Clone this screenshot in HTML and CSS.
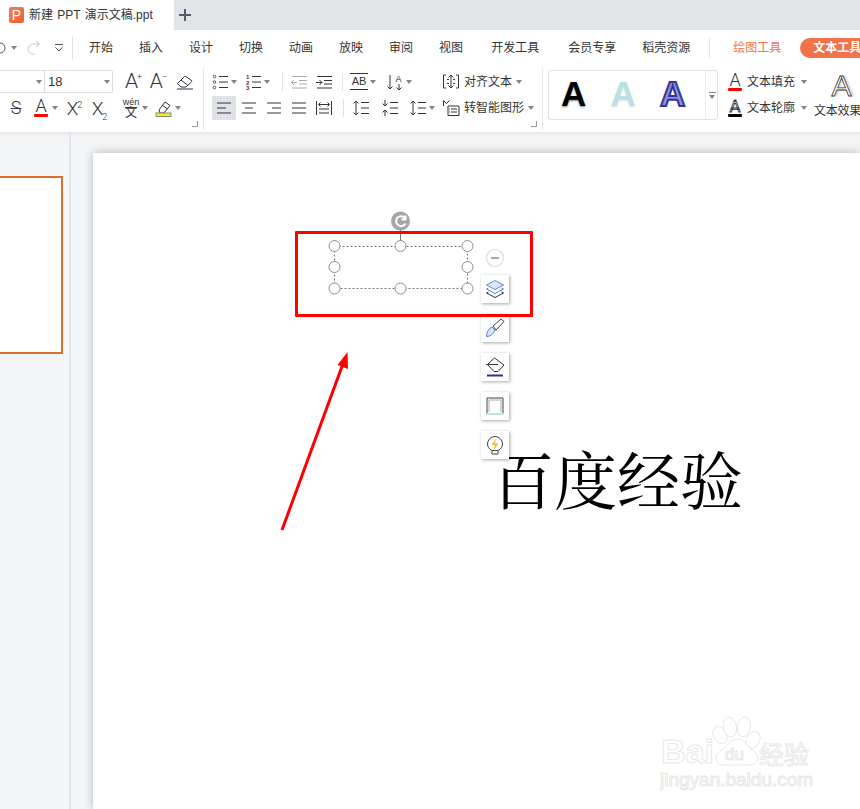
FILE: index.html
```html
<!DOCTYPE html>
<html lang="zh-CN">
<head>
    <meta charset="UTF-8">
    <meta name="viewport" content="width=device-width, initial-scale=1.0">
    <title>新建 PPT 演示文稿.ppt</title>
    <link rel="stylesheet" href="styles.css">
</head>
<body>
    <!-- 标签栏 -->
    <div class="tabbar">
        <div class="tab">
            <span class="logo">P</span>
            <span class="tab-title">新建 PPT 演示文稿.ppt</span>
        </div>
        <svg class="tab-add" width="14" height="14" viewBox="0 0 14 14"><path d="M7 1v12M1 7h12"/></svg>
    </div>

    <!-- 菜单栏 -->
    <div class="menubar">
        <svg class="quick" width="6" height="14" viewBox="0 0 6 14"><path d="M0 2a5 5 0 0 1 0 10"/></svg>
        <span class="caret caret-undo"></span>
        <svg class="quick-redo" width="14" height="16" viewBox="0 0 14 16"><path d="M12 4H6a5 5 0 0 0 0 10h2M9 1l3.500 3L9 7"/></svg>
        <svg class="quick-more" width="10" height="10" viewBox="0 0 10 10"><path d="M1 1.500h8M1.500 4.500L5 8l3.500-3.500"/></svg>
        <span class="sep sep-menu"></span>
        <nav class="menu">
            <a>开始</a><a>插入</a><a>设计</a><a>切换</a><a>动画</a><a>放映</a><a>审阅</a><a>视图</a>
            <a class="wide">开发工具</a><a class="wider">会员专享</a><a>稻壳资源</a>
        </nav>
        <span class="sep sep-tools"></span>
        <a class="tool-tab">绘图工具</a>
        <a class="tool-pill">文本工具</a>
    </div>

    <!-- 功能区 -->
    <div class="ribbon">
        <div class="group group-font">
            <div class="row">
                <div class="fontbox">
                    <div class="font-name"><span class="caret"></span></div>
                    <div class="font-size">18<span class="caret"></span></div>
                </div>
                <span class="glyph big ml-4">A<sup>+</sup></span>
                <span class="glyph big">A<sup>−</sup></span>
                <svg class="ic ml-2" viewBox="0 0 18 18"><path d="M1.500 10.500l7-7a1 1 0 0 1 1.400 0l5.600 4a1 1 0 0 1 0 1.400L10 14H5z"/><path d="M5 7l6.500 5M1 16h16"/></svg>
            </div>
            <div class="row">
                <span class="glyph strike ml-first">S</span>
                <div class="tool">
                    <span class="swatch"><span class="swatch-a">A</span><span class="bar bar-red"></span></span>
                    <span class="caret"></span>
                </div>
                <span class="glyph sub">X<sup>2</sup></span>
                <span class="glyph sub">X<sub>2</sub></span>
                <div class="tool ml-7">
                    <span class="pinyin"><span>wén</span><span>文</span></span>
                    <span class="caret"></span>
                </div>
                <div class="tool">
                    <svg class="ic" viewBox="0 0 18 18"><path d="M4 11l6-8 5 3.500-6 7.500H5z"/><path d="M7.500 6.500l5 3.500"/><rect class="hl" x="1" y="14" width="15" height="3.500"/></svg>
                    <span class="caret"></span>
                </div>
            </div>
            <svg class="corner" width="6" height="6" viewBox="0 0 6 6"><path d="M5.500 0v5.500H0"/></svg>
        </div>

        <div class="group group-para">
            <div class="row">
                <div class="tool">
                    <svg class="ic" viewBox="0 0 18 18"><circle cx="3.500" cy="3.500" r="1.300"/><circle cx="3.500" cy="9" r="1.300"/><circle cx="3.500" cy="14.500" r="1.300"/><path d="M8 3.500h9M8 9h9M8 14.500h9"/></svg>
                    <span class="caret"></span>
                </div>
                <div class="tool">
                    <svg class="ic" viewBox="0 0 18 18"><text class="num" x="2" y="6">1</text><text class="num" x="2" y="11.500">2</text><text class="num" x="2" y="17">3</text><path d="M8 3.500h9M8 9h9M8 14.500h9"/></svg>
                    <span class="caret"></span>
                </div>
                <span class="sep ml-5"></span>
                <svg class="ic off" viewBox="0 0 18 18"><path d="M2 3.500h15M9 7.500h8M9 11h8M2 15h15M7 9.500H1M4 7L1.500 9.500 4 12"/></svg>
                <svg class="ic" viewBox="0 0 18 18"><path d="M2 3.500h15M9 7.500h8M9 11h8M2 15h15M1 9.500h6M4.500 7L7 9.500 4.500 12"/></svg>
                <span class="sep ml-2"></span>
                <div class="tool">
                    <span class="ab">AB</span>
                    <span class="caret"></span>
                </div>
                <div class="tool ml-3">
                    <svg class="ic" viewBox="0 0 18 18"><path d="M4 2v14M1.500 13.500L4 16l2.500-2.500M13 11v6M10.500 14.500L13 17l2.500-2.500"/><text class="num-a" x="9.500" y="8.500">A</text></svg>
                    <span class="caret"></span>
                </div>
                <div class="tool tool-text ml-23">
                    <svg class="ic" viewBox="0 0 18 18"><path d="M4 2H1.500v13H4M14 2h2.500v13H14M9 2v13M6.500 4.500L9 2l2.500 2.500M6.500 12.500L9 15l2.500-2.500M5 6.500h2M11 6.500h2M5 10.500h2M11 10.500h2"/></svg>
                    <span class="label">对齐文本</span>
                    <span class="caret"></span>
                </div>
            </div>
            <div class="row">
                <div class="aligns">
                    <span class="cell active"><svg class="ic" viewBox="0 0 18 18"><path d="M2 4h14M2 9h9M2 14h14"/></svg></span>
                    <span class="cell"><svg class="ic" viewBox="0 0 18 18"><path d="M2 4h14M5 9h8M2 14h14"/></svg></span>
                    <span class="cell"><svg class="ic" viewBox="0 0 18 18"><path d="M2 4h14M7 9h9M2 14h14"/></svg></span>
                    <span class="cell"><svg class="ic" viewBox="0 0 18 18"><path d="M2 4h14M2 9h14M2 14h14"/></svg></span>
                    <span class="cell"><svg class="ic" viewBox="0 0 18 18"><path d="M1.500 2v14M16.500 2v14M4 10h10M4 14h10M3.500 5.500h11M5.500 3.500l-2 2 2 2M12.500 3.500l2 2-2 2"/></svg></span>
                </div>
                <span class="sep"></span>
                <svg class="ic ml-1" viewBox="0 0 18 18"><path d="M4 2v14M1.500 4.500L4 2l2.500 2.500M1.500 13.500L4 16l2.500-2.500M9 3.500h8M9 9h8M9 14.500h8"/></svg>
                <svg class="ic ml-4" viewBox="0 0 18 18"><path d="M4 1v6M1.500 4.500L4 7l2.500-2.500M4 11v6M1.500 13.500L4 11l2.500 2.500M9 3.500h8M9 9h8M9 14.500h8"/></svg>
                <div class="tool ml-3">
                    <svg class="ic" viewBox="0 0 18 18"><path d="M4 2v14M1.500 4.500L4 2l2.500 2.500M1.500 13.500L4 16l2.500-2.500M9 3.500h8M9 9h8M9 14.500h8"/></svg>
                    <span class="caret"></span>
                </div>
                <div class="tool tool-text">
                    <svg class="ic" viewBox="0 0 18 18"><path d="M1.500 7V1.500l3 3 3-3M6 7h11v9.500H6zM9 10h6M9 13h6M7 10h.8M7 13h.8"/></svg>
                    <span class="label">转智能图形</span>
                    <span class="caret"></span>
                </div>
            </div>
            <svg class="corner" width="6" height="6" viewBox="0 0 6 6"><path d="M5.500 0v5.500H0"/></svg>
        </div>

        <div class="gallery">
            <span class="style-a a-black">A</span>
            <span class="style-a a-teal">A</span>
            <span class="style-a a-blue">A</span>
            <div class="gallery-more"><span class="more-bar"></span><span class="caret"></span></div>
        </div>

        <div class="text-tools">
            <div class="tool tool-fill">
                <span class="swatch"><span class="swatch-a">A</span><span class="bar bar-red"></span></span>
                <span class="label">文本填充</span>
                <span class="caret"></span>
            </div>
            <div class="tool tool-fill">
                <span class="swatch"><span class="swatch-a swatch-outline">A</span><span class="bar bar-black"></span></span>
                <span class="label">文本轮廓</span>
                <span class="caret"></span>
            </div>
        </div>
        <div class="text-effect">
            <span class="effect-a">A</span>
            <span class="label">文本效果</span>
        </div>
    </div>

    <!-- 工作区 -->
    <div class="workspace">
        <aside class="sidebar">
            <div class="thumb"></div>
        </aside>
        <main class="editor">
            <div class="slide">
                <div class="red-box"></div>

                <svg class="canvas" width="767" height="656" viewBox="93 153 767 656">
                    <path class="arrow-line" d="M282 530L344 361"/>
                    <path class="arrow-head" d="M347.500 352L348 369 337.500 365z"/>
                    <path class="knob-line" d="M400.500 228v18"/>
                    <circle class="knob" cx="400.500" cy="221" r="9.500"/>
                    <path class="knob-mark" d="M405.500 223.500a5 5 0 1 1 -.5 -5.500M405.500 215.500v4h-4"/>
                    <rect class="dash" x="334.500" y="246.500" width="133" height="42"/>
                    <circle class="handle" cx="334.500" cy="246" r="5.500"/>
                    <circle class="handle" cx="400.500" cy="246" r="5.500"/>
                    <circle class="handle" cx="467.500" cy="246" r="5.500"/>
                    <circle class="handle" cx="334.500" cy="267" r="5.500"/>
                    <circle class="handle" cx="467.500" cy="267" r="5.500"/>
                    <circle class="handle" cx="334.500" cy="288.500" r="5.500"/>
                    <circle class="handle" cx="400.500" cy="288.500" r="5.500"/>
                    <circle class="handle" cx="467.500" cy="288.500" r="5.500"/>
                    <circle class="minus-ring" cx="495" cy="258" r="8.500"/>
                    <path class="minus-mark" d="M491 258h8"/>
                </svg>

                <div class="float-bar">
                    <div class="float-btn">
                        <svg width="20" height="20" viewBox="0 0 20 20"><path class="layer-top" d="M10 1.500l8.500 4.500-8.500 4.500L1.500 6z"/><path class="layer-mid" d="M3.500 9L1.500 10l8.500 4.500 8.500-4.500-2-1"/><path class="layer-low" d="M3.500 13l-2 1 8.500 4.500 8.500-4.500-2-1"/></svg>
                    </div>
                    <div class="float-btn">
                        <svg width="20" height="20" viewBox="0 0 20 20"><path class="brush-tip" d="M1.500 18.500c0-4 2-8 5.500-9.500l3 3c-1 3-4 6.500-8.500 6.500z"/><path class="brush-shaft" d="M8 8l8-7 3 2.500-8 8.500z"/></svg>
                    </div>
                    <div class="float-btn">
                        <svg width="20" height="20" viewBox="0 0 20 20"><path class="bucket" d="M1 7.500h12M9.500 1L2.500 7.500l6.500 7h4l6-6.500z"/><path class="bucket-bar" d="M2 18.500h16"/></svg>
                    </div>
                    <div class="float-btn">
                        <svg width="20" height="20" viewBox="0 0 20 20"><path class="frame" d="M2 17V2h16v15"/><path class="frame-in" d="M4 16V4h12v12"/><path class="frame-bar" d="M1 18h18"/></svg>
                    </div>
                    <div class="float-btn">
                        <svg width="20" height="20" viewBox="0 0 20 20"><path class="bulb" d="M7 15.500C4 14 2.500 11.800 2.500 9a7.500 7.500 0 0 1 15 0c0 2.800-1.500 5-4.500 6.500zM7 15.500v3.500h6v-3.500"/><path class="bolt" d="M11 3.500L6.500 10H10l-1 5 4.500-6.500H10z"/></svg>
                    </div>
                </div>

                <div class="slide-text">百度经验</div>

                <svg class="watermark" width="160" height="80" viewBox="0 0 160 80">
                    <ellipse cx="60" cy="21" rx="6.500" ry="9" transform="rotate(-30 60 21)"/>
                    <ellipse cx="70" cy="13" rx="6.500" ry="10" transform="rotate(-10 70 13)"/>
                    <ellipse cx="84" cy="13" rx="6.500" ry="10" transform="rotate(10 84 13)"/>
                    <ellipse cx="93" cy="26" rx="6.500" ry="9" transform="rotate(30 93 26)"/>
                    <path d="M78 25c-7 0-10 6-15 10-5 3-7 6-7 9 0 5 4 7 9 7h24c5 0 9-3 9-7 0-4-3-6-7-9-5-4-7-10-13-10z"/>
                    <text class="wm-bai" x="1" y="49">Bai</text>
                    <text class="wm-du" x="65" y="46">du</text>
                    <text class="wm-cn" x="99" y="50">经验</text>
                    <text class="wm-url" x="0" y="72">jingyan.baidu.com</text>
                </svg>
            </div>
        </main>
    </div>
</body>
</html>
```

FILE: styles.css
```css
* {
    box-sizing: border-box;
    margin: 0;
    padding: 0;
}
html, body {
    width: 860px;
    height: 809px;
    overflow: hidden;
}
body {
    display: flex;
    flex-direction: column;
    background-color: #fff;
    color: #333;
    font: 12px/1 "Liberation Sans", "Noto Sans CJK SC", sans-serif;
}
svg {
    display: block;
    flex: none;
}

/* 标签栏 */
.tabbar {
    display: flex;
    align-items: center;
    flex: none;
    height: 30px;
    background-color: #e3e4e8;
}
.tab {
    display: flex;
    align-items: center;
    gap: 5px;
    width: 174px;
    height: 30px;
    padding-left: 9px;
    background-color: #fff;
}
.logo {
    display: flex;
    align-items: center;
    justify-content: center;
    width: 15px;
    height: 16px;
    border-radius: 2px;
    background: linear-gradient(135deg, #f37f50, #ea6133);
    color: #fff;
    font-size: 14px;
}
.tab-title {
    font-size: 12px;
    word-spacing: 1px;
    white-space: nowrap;
}
.tab-add {
    margin-left: 4px;
    fill: none;
    stroke: #555c6b;
    stroke-width: 2;
}

/* 菜单栏 */
.menubar {
    display: flex;
    align-items: center;
    flex: none;
    height: 36px;
    white-space: nowrap;
}
.quick {
    fill: none;
    stroke: #555;
}
.caret {
    flex: none;
    width: 0;
    height: 0;
    border-style: solid;
    border-width: 4px 3.500px 0;
    border-color: #80848c transparent transparent;
}
.caret-undo {
    margin-left: 5px;
}
.quick-redo {
    margin-left: 10px;
    fill: none;
    stroke: #c8c8c8;
}
.quick-more {
    margin-left: 13px;
    fill: none;
    stroke: #555;
}
.sep {
    flex: none;
    width: 1px;
    height: 18px;
    background-color: #e2e3e6;
}
.sep-menu {
    height: 24px;
    margin-left: 8px;
}
.menu {
    display: flex;
    flex: none;
    gap: 26px;
    margin-left: 16px;
    a {
        display: block;
    }
    .wide {
        margin-left: 2px;
    }
    .wider {
        margin-left: 3px;
    }
}
.sep-tools {
    height: 20px;
    margin-left: 19px;
}
.tool-tab {
    flex: none;
    margin-left: 23px;
    color: #f2764a;
}
.tool-pill {
    flex: none;
    width: 70px;
    height: 20px;
    margin-left: 19px;
    padding: 4px 0 0 13px;
    border-radius: 10px;
    background-color: #f4714a;
    color: #fff;
    font-weight: bold;
}

/* 功能区 */
.ribbon {
    display: flex;
    flex: none;
    height: 66px;
    white-space: nowrap;
}
.group {
    position: relative;
    display: flex;
    flex: none;
    flex-direction: column;
    gap: 3px;
    height: 62px;
    margin-top: 2px;
    padding-top: 2px;
    border-right: 1px solid #e8e8e8;
}
.group-font {
    width: 204px;
}
.group-para {
    width: 339px;
    padding-left: 7px;
}
.row {
    display: flex;
    align-items: center;
    gap: 7px;
    height: 23px;
}
.row + .row {
    height: 24px;
}
.tool {
    display: flex;
    align-items: center;
    flex: none;
    gap: 2px;
}
.ic {
    width: 18px;
    height: 18px;
    fill: none;
    stroke: #30343c;
    stroke-width: 1;
}
.ic circle {
    stroke-width: 0.800;
}
.ic.off {
    stroke: #a9abaf;
}
.ic .num {
    fill: #30343c;
    stroke: none;
    font: bold 6px "Liberation Sans", sans-serif;
}
.ic .num-a {
    fill: #30343c;
    stroke: none;
    font: 9px "Liberation Sans", sans-serif;
}
.ic .hl {
    fill: #ffee00;
    stroke: #888;
}
.ml-first { margin-left: 7px; }
.ml-1 { margin-left: 1px; }
.ml-2 { margin-left: 2px; }
.ml-3 { margin-left: 3px; }
.ml-4 { margin-left: 4px; }
.ml-5 { margin-left: 5px; }
.ml-7 { margin-left: 7px; }
.ml-23 { margin-left: 23px; }
.corner {
    position: absolute;
    right: 5px;
    bottom: 3px;
    fill: none;
    stroke: #999;
}

/* 字体框 */
.fontbox {
    display: flex;
    flex: none;
    width: 113px;
    height: 23px;
    border: 1px solid #dedede;
    border-left: 0;
    border-radius: 0 2px 2px 0;
}
.font-name, .font-size {
    display: flex;
    align-items: center;
    justify-content: flex-end;
    padding-right: 1px;
}
.font-name {
    width: 45px;
    padding-right: 2px;
    border-right: 1px solid #dedede;
}
.font-size {
    flex: 1;
    justify-content: space-between;
    padding: 0 2px 0 3px;
    font-size: 13px;
}

/* 字母图标 */
.glyph {
    display: block;
    flex: none;
    width: 18px;
    color: #30343c;
    font-family: Roboto, "Liberation Sans", sans-serif;
    font-weight: 300;
    text-align: center;
    sup, sub {
        font-size: 9px;
        line-height: 0;
    }
}
.glyph.big {
    font-size: 21px;
    letter-spacing: -1px;
}
.glyph.sub {
    font-size: 19px;
    letter-spacing: -1px;
}
.glyph.strike {
    font-size: 18px;
    text-decoration: line-through;
    text-decoration-thickness: 1px;
}
.swatch {
    display: flex;
    flex: none;
    flex-direction: column;
    align-items: center;
    gap: 0;
    width: 18px;
}
.swatch-a {
    font-family: Roboto, "Liberation Sans", sans-serif;
    font-size: 18px;
    font-weight: 300;
    line-height: 14px;
}
.swatch-outline {
    color: #fff;
    font-size: 17px;
    font-weight: 400;
    -webkit-text-stroke: 0.800px #333;
}
.bar {
    display: block;
    width: 14px;
    height: 3px;
    margin-top: 1px;
    border-radius: 1px;
}
.bar-red {
    background-color: #f00;
}
.bar-black {
    background-color: #000;
}
.pinyin {
    display: flex;
    flex: none;
    flex-direction: column;
    align-items: center;
    width: 18px;
    font-size: 9px;
    span + span {
        font-size: 12px;
        line-height: 11px;
        border-top: 1px solid #333;
    }
}
.ab {
    flex: none;
    width: 18px;
    padding: 2px 0;
    border-top: 1px solid #333;
    border-bottom: 1px solid #333;
    font-size: 11px;
    text-align: center;
}
.aligns {
    display: flex;
    gap: 1px;
    margin-left: 1px;
}
.cell {
    display: flex;
    align-items: center;
    justify-content: center;
    width: 24px;
    height: 24px;
    border-radius: 2px;
    &.active {
        background-color: #dfe2e6;
    }
}
.tool-text {
    gap: 4px;
}

/* 样式库 */
.gallery {
    display: flex;
    flex: none;
    align-items: center;
    width: 170px;
    height: 50px;
    margin: 4px 0 0 5px;
    border: 1px solid #e2e2e2;
    border-radius: 3px;
}
.style-a {
    flex: none;
    width: 49.500px;
    margin-top: -4px;
    font-size: 35px;
    font-weight: bold;
    text-align: center;
}
.a-black {
    color: #000;
    text-shadow: 0 1px 2px rgba(0, 0, 0, 0.5);
}
.a-teal {
    color: #bcdfe4;
    text-shadow: 0 1px 2px rgba(150, 190, 200, 0.4);
}
.a-blue {
    color: #9092d6;
    -webkit-text-stroke: 2px #33359b;
}
.gallery-more {
    display: flex;
    flex: none;
    flex-direction: column;
    align-items: center;
    gap: 2px;
    width: 13px;
    height: 48px;
    margin-left: 7.500px;
    padding-top: 21px;
    border-left: 1px solid #eee;
    .more-bar {
        width: 7px;
        height: 1px;
        background-color: #80848c;
    }
}
.text-tools {
    display: flex;
    flex: none;
    flex-direction: column;
    gap: 3px;
    margin: 4px 0 0 8px;
}
.tool-fill {
    height: 23px;
    gap: 3px;
    .caret {
        margin-left: 3px;
    }
}
.tool-fill + .tool-fill {
    height: 24px;
}
.text-effect {
    display: flex;
    flex: none;
    flex-direction: column;
    align-items: center;
    width: 47px;
    margin: 4px 0 0 7px;
    .label {
        margin-top: 3px;
        letter-spacing: -0.200px;
    }
}
.effect-a {
    margin-left: 8px;
    color: #fff;
    font-size: 30px;
    line-height: 32px;
    -webkit-text-stroke: 0.800px #333;
    text-shadow: 3px 0 2px #ddd;
}

/* 工作区 */
.workspace {
    display: flex;
    flex: 1;
    min-height: 0;
    background-color: #f4f5f7;
    box-shadow: inset 0 3px 3px -1px #e6e6e6;
}
.sidebar {
    flex: none;
    width: 71px;
    padding-top: 44px;
    border-right: 2px solid #e3e4ec;
}
.thumb {
    width: 63px;
    height: 178px;
    border: 2px solid #d8702f;
    border-left: 0;
    background-color: #fff;
}
.editor {
    flex: 1;
    min-width: 0;
    padding: 21px 0 0 22px;
}
.slide {
    position: relative;
    height: 100%;
    background-color: #fff;
    box-shadow: 0 0 9px rgba(0, 0, 0, 0.25);
}
.canvas {
    position: absolute;
    left: 0;
    top: 0;
}
.red-box {
    position: absolute;
    left: 202px;
    top: 78px;
    z-index: 2;
    width: 238px;
    height: 86px;
    border: 3px solid #f00;
    border-radius: 1px;
}
.arrow-line {
    fill: none;
    stroke: #f00;
    stroke-width: 3;
}
.arrow-head {
    fill: #f00;
}
.knob-line {
    stroke: #777;
}
.knob {
    fill: #a5a5a5;
}
.knob-mark {
    fill: none;
    stroke: #fff;
    stroke-width: 2;
}
.dash {
    fill: none;
    stroke: #777;
    stroke-dasharray: 2 2;
}
.handle {
    fill: #fff;
    stroke: #8f8f8f;
}
.minus-ring {
    fill: #fff;
    stroke: #ddd;
    stroke-width: 1.200;
}
.minus-mark {
    stroke: #a8a8a8;
    stroke-width: 2;
}
.float-bar {
    position: absolute;
    left: 388px;
    top: 122px;
    display: flex;
    flex-direction: column;
    gap: 11px;
    z-index: 1;
}
.float-btn {
    display: flex;
    align-items: center;
    justify-content: center;
    width: 28px;
    height: 28px;
    background-color: #fff;
    box-shadow: 1px 1px 3px rgba(0, 0, 0, 0.35);
    svg {
        fill: none;
        stroke-width: 1;
    }
}
.layer-top {
    fill: #dbe7fb;
    stroke: #5b8be0;
}
.layer-mid {
    stroke: #5b8be0;
}
.layer-low {
    stroke: #333;
}
.brush-tip {
    fill: #d7e4fa;
    stroke: #4f7fd8;
}
.brush-shaft {
    stroke: #444;
}
.bucket {
    stroke: #333;
}
.bucket-bar {
    stroke: #2f2f9a;
    stroke-width: 2;
}
.frame {
    stroke: #444;
}
.frame-in {
    stroke: #aaa;
}
.frame-bar {
    stroke: #bfe0e4;
    stroke-width: 2;
}
.bulb {
    stroke: #444;
}
.bolt {
    fill: #f6b92c;
}
.slide-text {
    position: absolute;
    left: 398px;
    top: 292px;
    color: #000;
    font-family: "Noto Serif CJK SC", "Liberation Serif", "Noto Sans CJK SC", serif;
    font-size: 63px;
    line-height: 64px;
    white-space: nowrap;
}
.watermark {
    position: absolute;
    left: 567px;
    top: 561px;
    fill: #fff;
    stroke: #e8e8e8;
    stroke-width: 1;
    text {
        font-family: "Liberation Sans", "Noto Sans CJK SC", sans-serif;
    }
    .wm-bai {
        font-size: 34px;
        font-weight: bold;
    }
    .wm-du {
        font-size: 17px;
    }
    .wm-cn {
        font-size: 25px;
    }
    .wm-url {
        font-size: 19px;
    }
}
```
